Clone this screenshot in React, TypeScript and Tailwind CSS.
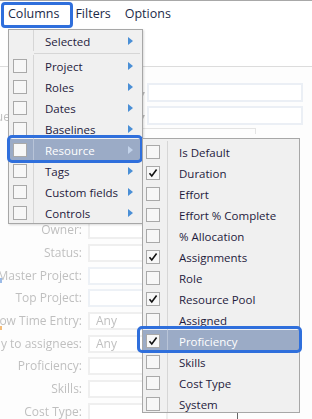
import React from "react";

const font = { fontFamily: '"Open Sans", "Noto Sans", sans-serif' };

type Item = { label: string; check?: boolean; box?: boolean; arrow?: boolean; active?: boolean };

const mainItems: Item[] = [
  { label: "Project", box: true, arrow: true },
  { label: "Roles", box: true, arrow: true },
  { label: "Dates", box: true, arrow: true },
  { label: "Baselines", box: true, arrow: true },
  { label: "Resource", box: true, arrow: true, active: true },
  { label: "Tags", box: true, arrow: true },
  { label: "Custom fields", box: true, arrow: true },
  { label: "Controls", box: true, arrow: true },
];

const subItems: Item[] = [
  { label: "Is Default" },
  { label: "Duration", check: true },
  { label: "Effort" },
  { label: "Effort % Complete" },
  { label: "% Allocation" },
  { label: "Assignments", check: true },
  { label: "Role" },
  { label: "Resource Pool", check: true },
  { label: "Assigned" },
  { label: "Proficiency", check: true, active: true },
  { label: "Skills" },
  { label: "Cost Type" },
  { label: "System" },
];

const Arrow = ({ light }: { light?: boolean }) => (
  <svg width="5" height="8" viewBox="0 0 5 8" className="shrink-0">
    <path d="M0 0 L5 4 L0 8 Z" fill={light ? "#c3d3ea" : "#4a8fd6"} />
  </svg>
);

const Box = ({ checked }: { checked?: boolean }) => (
  <div className="w-[14px] h-[14px] border border-[#a9a9a9] bg-[#f7f7f7] flex items-center justify-center">
    {checked && (
      <svg width="10" height="10" viewBox="0 0 10 10">
        <path d="M1.5 5.2 L3.8 8 L8.6 1.6" fill="none" stroke="#111" strokeWidth="1.6" />
      </svg>
    )}
  </div>
);

const Row = ({ item, boxLeft, arrows }: { item: Item; boxLeft: string; arrows?: boolean }) => (
  <div className={`h-[21px] flex items-center ${item.active ? "bg-[#9babc6]" : ""}`}>
    <div className={`w-[25px] h-full flex items-center ${boxLeft} border-r ${item.active ? "border-[#b8c4d8]" : "border-[#d6d6d6]"}`}>
      {(item.box || item.check !== undefined || !arrows) && <Box checked={item.check} />}
    </div>
    <div className={`flex-1 pl-[11px] pt-[2px] text-[11.5px] leading-none whitespace-nowrap ${item.active ? "text-white" : "text-[#1f1b3d]"}`}>
      {item.label}
    </div>
    {arrows && (
      <div className="w-[14px] flex items-center">
        <Arrow light={item.active} />
      </div>
    )}
  </div>
);

const Field = ({ label, value, blue }: { label: string; value?: string; blue?: boolean }) => (
  <div className="h-[22.7px] flex items-center">
    <div className="w-[82px] flex justify-end text-[12px] text-[#8c8c8c] whitespace-nowrap">
      <span className="shrink-0">{label}</span>
    </div>
    <div className={`ml-[6px] w-[80px] h-[18px] border-2 ${blue ? "border-[#dfe6f0]" : "border-[#e2e2e2]"} bg-white text-[12px] text-[#8c8c8c] leading-[14px] pl-[6px]`}>
      {value}
    </div>
  </div>
);

export default function App() {
  return (
    <div className="relative w-[312px] h-[419px] overflow-hidden bg-white" style={font}>
      {/* header */}
      <div className="h-[67px] border-t border-[#a8a8a8] border-b border-b-[#dcdcdc] bg-white">
        <div className="flex items-center h-[27px] text-[12.5px] text-[#1c2a48]">
          <span className="ml-[8px]">Columns</span>
          <span className="ml-[16px]">Filters</span>
          <span className="ml-[14px]">Options</span>
        </div>
      </div>

      {/* faded background form */}
      <div className="blur-[0.7px] opacity-55 bg-[#fcfcfc] h-[352px]">
        <div className="pt-[16px] flex flex-col gap-[4px] pl-[141px]">
          <div className="flex items-center gap-[2px]">
            <span className="text-[8px] text-[#888]">▾</span>
            <div className="w-[156px] h-[19px] border-2 border-[#dbe3ee] bg-white" />
          </div>
          <div className="flex items-center gap-[2px]">
            <span className="text-[8px] text-[#888]">▾</span>
            <div className="w-[156px] h-[19px] border-2 border-[#dbe3ee] bg-white" />
          </div>
        </div>
        <div className="text-[12px] text-[#8c8c8c] -mt-[17px] -ml-[21px]">Value</div>
        <div className="ml-[130px] mt-[2px] w-[126px] h-[6px] border-t border-r border-[#cfcfcf]" />
        <div className="mt-[85px]">
          <Field label="Owner:" />
          <Field label="Status:" />
          <Field label="Master Project:" blue />
          <Field label="Top Project:" blue />
          <Field label="Allow Time Entry:" value="Any" />
          <Field label="Apply to assignees:" value="Any" />
          <Field label="Proficiency:" />
          <Field label="Skills:" />
          <Field label="Cost Type:" />
        </div>
      </div>
      <div className="absolute left-0 top-[278px] w-[2px] h-[5px] bg-[#5b8fd8] opacity-60" />
      <div className="absolute left-0 top-[326px] w-[2px] h-[4px] bg-[#f0a040] opacity-70" />
      <div className="absolute left-[224px] top-[409px] text-[12px] text-[#222]">⌄</div>
      <div className="absolute left-[237px] top-[412px] w-px h-[7px] bg-[#666]" />

      {/* Columns highlight */}
      <div className="absolute left-[1px] top-[2px] w-[72px] h-[26px] border-[3px] border-[#2f6fdc] rounded-[4px]" />

      {/* main menu */}
      <div className="absolute left-[8px] top-[29px] w-[135px] h-[195px] bg-[#f0f0f0] border border-[#a7a7a7] shadow-[1px_1px_2px_rgba(0,0,0,0.15)]">
        <div className="h-[21px] flex items-center">
          <div className="w-[25px] h-full border-r border-[#d6d6d6]" />
          <div className="flex-1 pl-[11px] pt-[2px] text-[11.5px] leading-none text-[#1f1b3d]">Selected</div>
          <div className="w-[14px] flex items-center"><Arrow /></div>
        </div>
        <div className="h-[4px] flex flex-col justify-center">
          <div className="ml-[25px] mr-[2px] h-px bg-[#d6d6d6]" />
        </div>
        {mainItems.map((it) => (
          <Row key={it.label} item={it} boxLeft="pl-[4px]" arrows />
        ))}
      </div>
      <div className="absolute left-[7px] top-[135px] w-[136px] h-[28px] border-[3px] border-[#2f6fdc] rounded-[5px]" />

      {/* submenu */}
      <div className="absolute left-[142px] top-[138px] w-[158px] h-[275px] overflow-hidden bg-[#f0f0f0] border border-[#a7a7a7] pt-[2px]">
        {subItems.map((it) => (
          <Row key={it.label} item={it} boxLeft="pl-[3px]" />
        ))}
      </div>
      <div className="absolute left-[137px] top-[326px] w-[165px] h-[27px] border-[3px] border-[#2f6fdc] rounded-[5px]" />
    </div>
  );
}
